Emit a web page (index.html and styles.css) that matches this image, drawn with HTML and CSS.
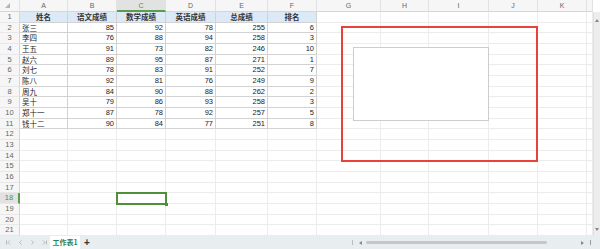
FILE: index.html
```html
<!DOCTYPE html>
<html lang="zh-CN">
<head>
<meta charset="utf-8">
<title>工作表1</title>
<link rel="stylesheet" href="styles.css">
</head>
<body>
<div class="app">
  <div class="main">
    <div class="sheet">
      <div class="hd corner"><svg width="5" height="5" viewBox="0 0 5 5"><polygon points="5,0 5,5 0,5" fill="#b5b5b5"/></svg></div>
      <div class="hd">A</div><div class="hd">B</div><div class="hd on">C</div><div class="hd">D</div><div class="hd">E</div><div class="hd">F</div><div class="hd">G</div><div class="hd">H</div><div class="hd">I</div><div class="hd">J</div><div class="hd">K</div><div class="hd"></div>

      <div class="rh">1</div><div class="t b">姓名</div><div class="t b">语文成绩</div><div class="t b">数学成绩</div><div class="t b">英语成绩</div><div class="t b">总成绩</div><div class="t b">排名</div><div></div><div></div><div></div><div></div><div></div><div></div>

      <div class="rh">2</div><div class="t">张三</div><div class="t n">85</div><div class="t n">92</div><div class="t n">78</div><div class="t n">255</div><div class="t n">6</div><div></div><div></div><div></div><div></div><div></div><div></div>
      <div class="rh">3</div><div class="t">李四</div><div class="t n">76</div><div class="t n">88</div><div class="t n">94</div><div class="t n">258</div><div class="t n">3</div><div></div><div></div><div></div><div></div><div></div><div></div>
      <div class="rh">4</div><div class="t">王五</div><div class="t n">91</div><div class="t n">73</div><div class="t n">82</div><div class="t n">246</div><div class="t n">10</div><div></div><div></div><div></div><div></div><div></div><div></div>
      <div class="rh">5</div><div class="t">赵六</div><div class="t n">89</div><div class="t n">95</div><div class="t n">87</div><div class="t n">271</div><div class="t n">1</div><div></div><div></div><div></div><div></div><div></div><div></div>
      <div class="rh">6</div><div class="t">刘七</div><div class="t n">78</div><div class="t n">83</div><div class="t n">91</div><div class="t n">252</div><div class="t n">7</div><div></div><div></div><div></div><div></div><div></div><div></div>
      <div class="rh">7</div><div class="t">陈八</div><div class="t n">92</div><div class="t n">81</div><div class="t n">76</div><div class="t n">249</div><div class="t n">9</div><div></div><div></div><div></div><div></div><div></div><div></div>
      <div class="rh">8</div><div class="t">周九</div><div class="t n">84</div><div class="t n">90</div><div class="t n">88</div><div class="t n">262</div><div class="t n">2</div><div></div><div></div><div></div><div></div><div></div><div></div>
      <div class="rh">9</div><div class="t">吴十</div><div class="t n">79</div><div class="t n">86</div><div class="t n">93</div><div class="t n">258</div><div class="t n">3</div><div></div><div></div><div></div><div></div><div></div><div></div>
      <div class="rh">10</div><div class="t">郑十一</div><div class="t n">87</div><div class="t n">78</div><div class="t n">92</div><div class="t n">257</div><div class="t n">5</div><div></div><div></div><div></div><div></div><div></div><div></div>
      <div class="rh">11</div><div class="t">钱十二</div><div class="t n">90</div><div class="t n">84</div><div class="t n">77</div><div class="t n">251</div><div class="t n">8</div><div></div><div></div><div></div><div></div><div></div><div></div>

      <div class="rh">12</div><div></div><div></div><div></div><div></div><div></div><div></div><div></div><div></div><div></div><div></div><div></div><div></div>
      <div class="rh">13</div><div></div><div></div><div></div><div></div><div></div><div></div><div></div><div></div><div></div><div></div><div></div><div></div>
      <div class="rh">14</div><div></div><div></div><div></div><div></div><div></div><div></div><div></div><div></div><div></div><div></div><div></div><div></div>
      <div class="rh">15</div><div></div><div></div><div></div><div></div><div></div><div></div><div></div><div></div><div></div><div></div><div></div><div></div>
      <div class="rh">16</div><div></div><div></div><div></div><div></div><div></div><div></div><div></div><div></div><div></div><div></div><div></div><div></div>
      <div class="rh">17</div><div></div><div></div><div></div><div></div><div></div><div></div><div></div><div></div><div></div><div></div><div></div><div></div>
      <div class="rh on">18</div><div></div><div></div><div class="sel"></div><div></div><div></div><div></div><div></div><div></div><div></div><div></div><div></div><div></div>
      <div class="rh">19</div><div></div><div></div><div></div><div></div><div></div><div></div><div></div><div></div><div></div><div></div><div></div><div></div>
      <div class="rh">20</div><div></div><div></div><div></div><div></div><div></div><div></div><div></div><div></div><div></div><div></div><div></div><div></div>
      <div class="rh">21</div><div></div><div></div><div></div><div></div><div></div><div></div><div></div><div></div><div></div><div></div><div></div><div></div>
    </div>
    <div class="vscroll">
      <svg width="4" height="3" viewBox="0 0 4 3"><polygon points="2,0 4,3 0,3" fill="#888"/></svg>
      <svg width="4" height="3" viewBox="0 0 4 3"><polygon points="0,0 4,0 2,3" fill="#888"/></svg>
    </div>
    <div class="shape-frame"></div>
    <div class="shape-box"></div>
  </div>
  <div class="tabbar">
    <div class="nav">
      <svg width="5" height="5" viewBox="0 0 5 5"><path d="M0.5 0.5V4.5M4 0.5L2 2.5L4 4.5" stroke="#a8a8a8" fill="none" stroke-width="0.8"/></svg>
      <svg width="5" height="5" viewBox="0 0 5 5"><path d="M3.5 0.5L1.5 2.5L3.5 4.5" stroke="#a8a8a8" fill="none" stroke-width="0.8"/></svg>
      <svg width="5" height="5" viewBox="0 0 5 5"><path d="M1.5 0.5L3.5 2.5L1.5 4.5" stroke="#a8a8a8" fill="none" stroke-width="0.8"/></svg>
      <svg width="5" height="5" viewBox="0 0 5 5"><path d="M1 0.5L3 2.5L1 4.5M4.5 0.5V4.5" stroke="#a8a8a8" fill="none" stroke-width="0.8"/></svg>
    </div>
    <div class="tab">工作表1</div>
    <div class="plus">+</div>
    <div class="hbar">
      <span class="sep"></span>
      <svg class="arr" width="3" height="4" viewBox="0 0 3 4"><polygon points="3,0 3,4 0,2" fill="#888"/></svg>
      <span class="thumb"></span>
      <svg class="arr2" width="3" height="4" viewBox="0 0 3 4"><polygon points="0,0 3,2 0,4" fill="#888"/></svg>
      <span class="dots"></span>
    </div>
  </div>
</div>
</body>
</html>
```

FILE: styles.css
```css
* {
  box-sizing: border-box;
  margin: 0;
  padding: 0;
}

body {
  width: 600px;
  height: 249px;
  overflow: hidden;
  background: #fff;
  font-family: "Noto Sans CJK SC", "Liberation Sans", sans-serif;
  font-size: 7.5px;
  color: #222;
}

.app {
  display: flex;
  flex-direction: column;
  height: 249px;
}

.main {
  position: relative;
  display: flex;
  height: 236px;
}

.sheet {
  display: grid;
  grid-template-columns: 20px 48px 49px 49px 50px 52px 49px 64px 48px 60px 49px 49px 6px;
  grid-template-rows: 12px repeat(21, 1fr);
  width: 593px;
  height: 236px;
}

.sheet > div {
  border-right: 1px solid #ececec;
  border-bottom: 1px solid #ececec;
  line-height: 10px;
  padding: 0 2px;
  white-space: nowrap;
  overflow: hidden;
}

.sheet > .hd {
  background: #f6f6f6;
  color: #666;
  text-align: center;
  line-height: 11px;
  font-size: 7px;
  font-family: "Liberation Sans", "Noto Sans CJK SC", sans-serif;
  border-right-color: #e2e2e2;
  border-bottom-color: #d6d6d6;
}

.sheet > .corner {
  display: flex;
  align-items: center;
  padding-left: 5px;
}

.sheet > .hd.on {
  background: #e2e2e2;
  color: #3d8f7c;
  border-bottom: 2px solid #5a9e4c;
}

.sheet > .rh {
  background: #f6f6f6;
  color: #666;
  text-align: center;
  font-family: "Liberation Sans", "Noto Sans CJK SC", sans-serif;
  border-right-color: #d6d6d6;
  border-bottom-color: #e8e8e8;
  padding: 0;
}

.sheet > .rh.on {
  background: #e2e2e2;
  color: #3d8f7c;
  border-right: 2px solid #5a9e4c;
}

.sheet > .t {
  border-right-color: #d2d2d2;
  border-bottom-color: #d2d2d2;
}

.sheet > .b {
  background: #dce9f7;
  font-weight: bold;
  text-align: center;
  color: #333;
}

.sheet > .n {
  text-align: right;
  font-family: "Liberation Sans", "Noto Sans CJK SC", sans-serif;
}

.sheet > .sel {
  position: relative;
  overflow: visible;
  outline: 2px solid #4e8f3a;
  outline-offset: -1px;
}

.sel::after {
  content: "";
  position: absolute;
  right: -3px;
  bottom: -3px;
  width: 3px;
  height: 3px;
  background: #4e8f3a;
}

.vscroll {
  width: 7px;
  margin-top: 12px;
  background: #ededed;
  border-left: 1px solid #e0e0e0;
  display: flex;
  flex-direction: column;
  justify-content: space-between;
  align-items: center;
  padding: 7px 0 5px;
}

.shape-frame {
  position: absolute;
  left: 341px;
  top: 26px;
  width: 197px;
  height: 136px;
  border: 2px solid #e8423a;
}

.shape-box {
  position: absolute;
  left: 353px;
  top: 47px;
  width: 136px;
  height: 74px;
  background: #fff;
  border: 1px solid #cdcdcd;
}

.tabbar {
  display: flex;
  align-items: center;
  height: 13px;
  background: #e8eef0;
}

.nav {
  display: flex;
  align-items: center;
  width: 50px;
  height: 100%;
  padding-left: 6px;
  gap: 7px;
}

.tab {
  width: 30px;
  height: 100%;
  background: #fff;
  color: #2a7f5c;
  font-weight: bold;
  font-size: 7px;
  line-height: 13px;
  text-align: center;
}

.plus {
  margin-left: 4px;
  font-family: "Liberation Sans", sans-serif;
  font-size: 10px;
  font-weight: bold;
  line-height: 13px;
  color: #333;
}

.hbar {
  margin-left: auto;
  width: 250px;
  height: 100%;
  display: flex;
  align-items: center;
}

.sep {
  margin-left: 2px;
  width: 1px;
  height: 5px;
  background: #bbb;
}

.arr {
  margin-left: 6px;
}

.thumb {
  margin-left: 4px;
  width: 181px;
  height: 3px;
  border-radius: 2px;
  background: #c6c6c6;
}

.arr2 {
  margin-left: 34px;
}

.dots {
  margin-left: 6px;
  width: 1px;
  height: 5px;
  background: #999;
}
```
